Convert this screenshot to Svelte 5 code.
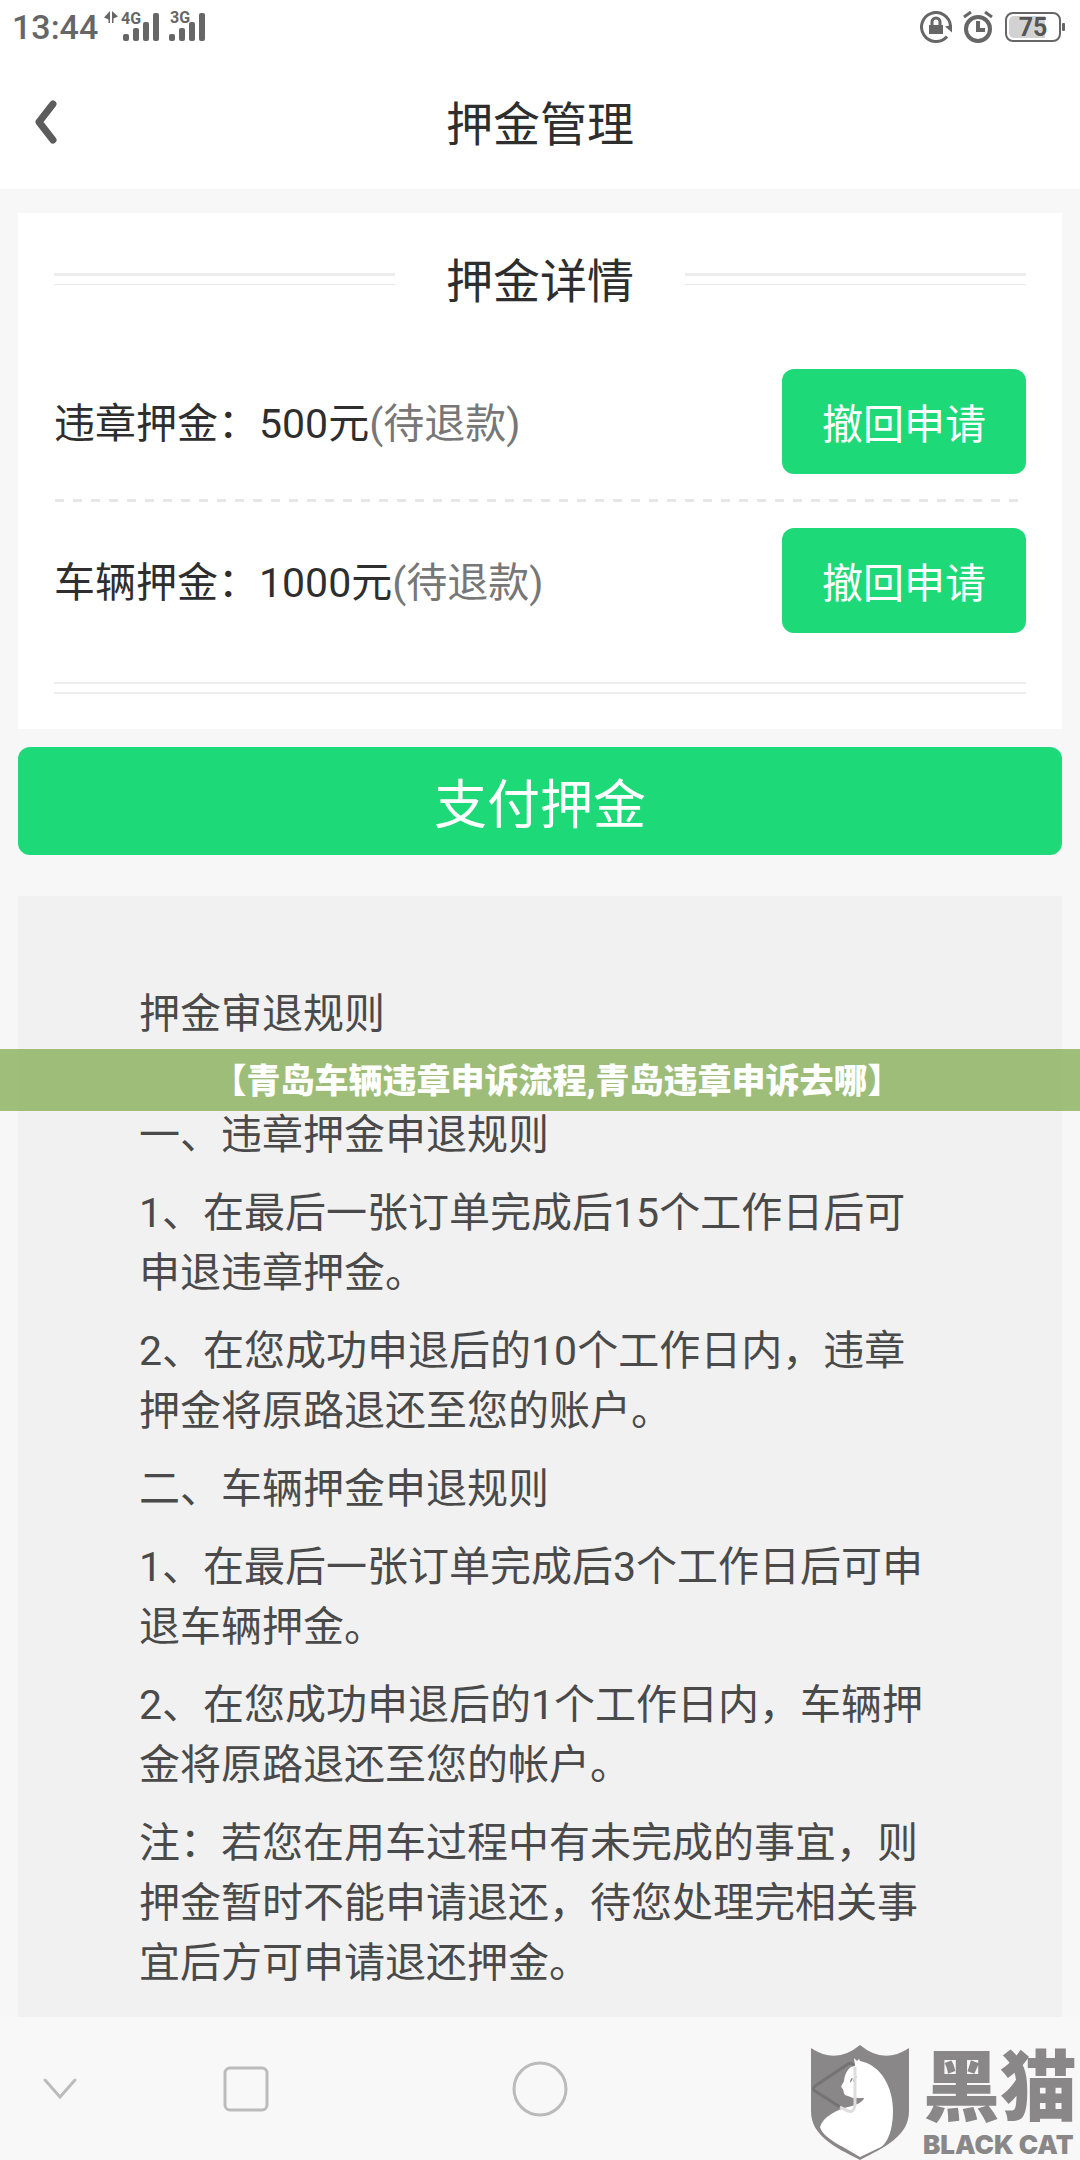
<script lang="ts">
	type Deposit = {
		id: number;
		name: string;
		amount: number;
		status: string;
	};

	const deposits: Deposit[] = [
		{ id: 1, name: '违章押金', amount: 500, status: '待退款' },
		{ id: 2, name: '车辆押金', amount: 1000, status: '待退款' }
	];

	const rules = [
		'一、违章押金申退规则',
		'1、在最后一张订单完成后15个工作日后可申退违章押金。',
		'2、在您成功申退后的10个工作日内，违章押金将原路退还至您的账户。',
		'二、车辆押金申退规则',
		'1、在最后一张订单完成后3个工作日后可申退车辆押金。',
		'2、在您成功申退后的1个工作日内，车辆押金将原路退还至您的帐户。',
		'注：若您在用车过程中有未完成的事宜，则押金暂时不能申请退还，待您处理完相关事宜后方可申请退还押金。'
	];
</script>

<div class="page" lang="zh-CN">
	<div class="status-bar">
		<span class="time">13:44</span>
		<svg class="signal" width="56" height="42" viewBox="0 0 56 42">
			<path d="M6 5v12H4.500V13.500L0 11.500zM8 5l6 5.500L9.500 12.500V17H8z" />
			<text x="17" y="18">4G</text>
			<rect x="19" y="28" width="6" height="7" rx="2" />
			<rect x="29" y="22" width="6" height="13" rx="2" />
			<rect x="39" y="16" width="6" height="19" rx="2" />
			<rect x="49" y="7" width="6" height="28" rx="2" />
		</svg>
		<svg class="signal" width="38" height="42" viewBox="0 0 38 42">
			<text x="1" y="17">3G</text>
			<rect x="0" y="28" width="6" height="7" rx="2" />
			<rect x="10" y="22" width="6" height="13" rx="2" />
			<rect x="20" y="16" width="6" height="19" rx="2" />
			<rect x="30" y="7" width="6" height="28" rx="2" />
		</svg>

		<div class="status-right">
			<svg width="32" height="32" viewBox="0 0 32 32" fill="none" stroke="#666" stroke-width="3">
				<path d="M30.500 15A14.500 14.500 0 1 0 27 25.500" />
				<path d="M25 15.500l7 6V14z" fill="#666" stroke="none" />
				<rect x="9" y="14" width="14" height="9" fill="#666" stroke="none" />
				<path d="M12 15v-4a4 4 0 0 1 8 0v4" />
			</svg>
			<svg width="32" height="32" viewBox="0 0 32 32" fill="none" stroke="#666">
				<circle cx="16" cy="18" r="12" stroke-width="4" />
				<path d="M2 6l7-5M30 6l-7-5" stroke-width="3" />
				<path d="M16 10v9h7" stroke-width="4" />
			</svg>
			<svg class="battery" width="62" height="32" viewBox="0 0 62 32">
				<rect x="2" y="2" width="54" height="28" rx="7" fill="#fff" stroke="#666" stroke-width="2" />
				<path d="M10 5h31v22H10a5 5 0 0 1-5-5V10a5 5 0 0 1 5-5z" fill="#d2d2d2" />
				<rect x="58" y="12" width="3" height="8" rx="1" fill="#666" />
				<text x="29" y="25" text-anchor="middle">75</text>
			</svg>
		</div>
	</div>

	<header>
		<button class="back" aria-label="返回">
			<svg width="22" height="44" viewBox="0 0 22 44" fill="none">
				<path d="M18 4L4 22l14 18" stroke="#5c5c5c" stroke-width="7" stroke-linecap="round" stroke-linejoin="round" />
			</svg>
		</button>
		<h1>押金管理</h1>
	</header>

	<main>
		<section class="card">
			<div class="card-title">
				<span class="line"></span>
				<h2>押金详情</h2>
				<span class="line"></span>
			</div>

			{#each deposits as deposit, i (deposit.id)}
				{#if i > 0}
					<div class="dashes"></div>
				{/if}
				<div class="row">
					<span class="label">{deposit.name}：{deposit.amount}元<span class="state">({deposit.status})</span></span>
					<button class="withdraw">撤回申请</button>
				</div>
			{/each}

			<div class="card-end"></div>
		</section>

		<button class="pay">支付押金</button>

		<section class="rules">
			<h3>押金审退规则</h3>
			{#each rules as rule}
				<p>{rule}</p>
			{/each}
		</section>
	</main>

	<nav>
		<button aria-label="收起">
			<svg width="34" height="22" viewBox="0 0 34 22"><path d="M2 2l15 17L32 2" /></svg>
		</button>
		<button aria-label="最近任务">
			<svg width="46" height="46" viewBox="0 0 46 46"><rect x="2" y="2" width="42" height="42" rx="5" /></svg>
		</button>
		<button aria-label="主屏幕">
			<svg width="56" height="56" viewBox="0 0 56 56"><circle cx="28" cy="28" r="26" /></svg>
		</button>
		<button aria-label="后退"></button>
	</nav>

	<div class="banner">【青岛车辆违章申诉流程,青岛违章申诉去哪】</div>

	<div class="watermark">
		<!-- the back key shows through the shield -->
		<svg width="98" height="116" viewBox="0 0 98 116">
			<path d="M0 3Q25 20 49 0Q73 20 98 3V66C98 91 74 102 49 115C24 102 0 91 0 66z" fill="#8a8788" />
			<path d="M43 13l3 3 2-2 1 2C70 20 82 42 82 66C82 86 76 98 70 102L49 112L32 102C20 96 10 88 9 82C12 72 25 65 37 62C46 60 52 57 53 53H42L37 51C31 50 34 46 31 43C29 41 32 39 33 36C34 27 38 22 44 20z" fill="#fff" />
			<path d="M39 38q0-5 3-5-1 3-3 5zM42 37q0-4 4-6-1 4-4 6z" fill="#8a8788" />
			<path d="M43 21q-2-4-6-2L4 41q-3 3 0 5L29 62" fill="none" stroke="#757374" stroke-width="3" />
			<path d="M44 22V60q-1 8-7 6l-8-4" fill="none" stroke="#ddd" stroke-width="3" />
		</svg>
		<div class="brand">
			<strong>黑猫</strong>
			<span>BLACK CAT</span>
		</div>
	</div>
</div>

<style>
	:global(body) {
		background: #f8f8f8;
	}

	.page {
		position: relative;
		font-family: Roboto, 'Noto Sans CJK SC', sans-serif;
		color: #2e2e2e;
	}

	button {
		padding: 0;
		border: none;
		background: transparent;
		font-family: inherit;
		cursor: pointer;
	}

	svg {
		display: block;
	}

	h1,
	h2,
	h3 {
		margin: 0;
		font-weight: 400;
	}

	h1,
	h2 {
		padding-top: 6px;
		font-size: 47px;
		line-height: 60px;
	}

	.status-bar {
		display: flex;
		align-items: center;
		gap: 9px;
		height: 54px;
		padding: 0 14px 0 12px;
		background: #fff;
		color: #666;
	}

	.time {
		margin-right: -3px;
		font-size: 34px;
		font-weight: 500;
	}

	.signal {
		fill: #666;
	}

	.signal text {
		font-size: 16px;
		font-weight: 700;
	}

	.status-right {
		display: flex;
		align-items: center;
		gap: 10px;
		margin-left: auto;
	}

	.battery text {
		font-size: 25px;
		font-weight: 700;
		fill: #555;
	}

	header {
		display: grid;
		grid-template-columns: 92px 1fr 92px;
		align-items: center;
		height: 135px;
		background: #fff;
		text-align: center;
	}

	.back {
		display: flex;
		justify-content: center;
	}

	main {
		padding: 24px 18px 0;
		background: #f7f7f7;
	}

	.card {
		padding: 33px 36px 35px;
		background: #fff;
	}

	.card-title {
		display: flex;
		align-items: center;
		gap: 51px;
		margin-bottom: 31px;
	}

	.line {
		flex: 1;
		height: 8px;
		border-top: 3px solid #ededed;
		border-bottom: 1px solid #e8e8e8;
	}

	.row {
		display: flex;
		align-items: center;
		justify-content: space-between;
		padding: 26px 0 25px;
	}

	.dashes {
		height: 3px;
		background: repeating-linear-gradient(90deg, #fff 0 1px, #e6e6e6 1px 10px, #fff 10px 18px);
	}

	.label {
		padding-top: 4px;
		font-size: 41px;
		line-height: 60px;
	}

	.state {
		color: #777;
	}

	.withdraw,
	.pay {
		border-radius: 12px;
		background: #1ed978;
		color: #fff;
	}

	.withdraw {
		height: 105px;
		padding: 0 40px 2px;
		font-size: 41px;
	}

	.card-end {
		height: 8px;
		margin-top: 24px;
		border-top: 2px solid #eee;
		border-bottom: 2px solid #eee;
	}

	.pay {
		display: block;
		width: 100%;
		height: 108px;
		margin: 18px 0 41px;
		font-size: 53px;
	}

	.rules {
		padding: 88px 121px 24px;
		background: #f1f1f1;
		color: #4a4a4a;
		font-size: 41px;
		line-height: 60px;
	}

	.rules h3 {
		margin-bottom: 61px;
		font-size: 41px;
	}

	.rules p {
		margin: 18px 0 0;
	}

	.rules h3 + p {
		margin-top: 0;
	}

	nav {
		display: grid;
		grid-template-columns: 120fr 252fr 336fr 252fr 120fr;
		height: 144px;
	}

	nav button {
		display: flex;
		align-items: center;
		justify-content: center;
	}

	nav svg {
		fill: none;
		stroke: #bbb;
		stroke-width: 3;
		stroke-linecap: round;
	}

	/* sits over the rules text */
	.banner {
		position: absolute;
		top: 1049px;
		left: 0;
		right: 0;
		padding: 2px 0 0 34px;
		background: rgba(150, 185, 110, 0.92);
		color: #fff;
		font-size: 34px;
		font-weight: 900;
		line-height: 60px;
		text-align: center;
	}

	.watermark {
		position: absolute;
		right: 0;
		bottom: 0;
		display: flex;
		gap: 14px;
		color: #8a8788;
	}

	.brand {
		display: flex;
		flex-direction: column;
		width: 157px;
	}

	.brand strong {
		font-size: 77px;
		font-weight: 900;
		line-height: 88px;
	}

	.brand span {
		font-family: Inter, sans-serif;
		font-size: 26px;
		font-weight: 900;
		line-height: 24px;
		white-space: nowrap;
	}
</style>
